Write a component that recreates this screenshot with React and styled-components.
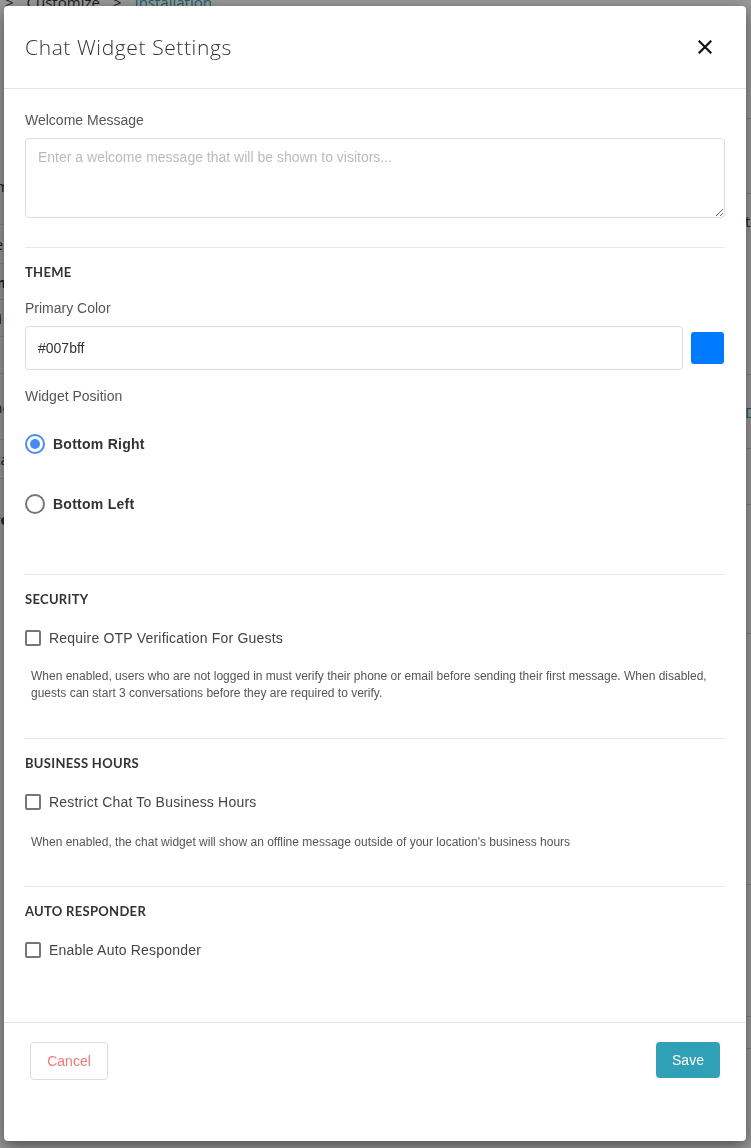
import React from 'react';
import styled, { createGlobalStyle } from 'styled-components';

const GlobalStyle = createGlobalStyle`
  html, body {
    margin: 0;
    padding: 0;
  }
  body {
    font-family: "Liberation Sans", Arial, sans-serif;
    background: #fff;
    overflow: hidden;
  }
  * {
    box-sizing: border-box;
  }
`;

// Page behind the modal, only a few pixels show at the edges
const Page = styled.div`
  position: relative;
  width: 751px;
  height: 1148px;
  overflow: hidden;
`;

const Breadcrumb = styled.div`
  display: flex;
  gap: 13px;
  margin-top: -8px;
  padding-left: 5px;
  font-family: "Open Sans", sans-serif;
  font-size: 15px;
  line-height: 20px;
`;

const Crumb = styled.span`
  color: ${props => (props.$active ? '#2a9fb5' : '#333')};
`;

const BackGrid = styled.div`
  display: flex;
`;

const BackColumn = styled.div`
  width: ${props => props.$width}px;
  padding-top: ${props => props.$top}px;
  flex-shrink: 0;
`;

const BackRow = styled.div`
  height: ${props => props.$h}px;
  border-bottom: ${props => (props.$line ? '1px solid #ddd' : 'none')};
  display: flex;
  flex-direction: column;
  justify-content: ${props => (props.$top ? 'flex-start' : 'center')};
  padding-top: ${props => (props.$top ? '10px' : '0')};
  margin-left: ${props => props.$shift || 0}px;
  font-family: "Open Sans", sans-serif;
  font-size: 15px;
  line-height: 34px;
  font-weight: ${props => (props.$bold ? 700 : 400)};
  color: ${props => props.$color || '#333'};
`;

const Overlay = styled.div`
  position: fixed;
  inset: 0;
  display: flex;
  padding: 6px 5px 7px 4px;
  background: rgba(0, 0, 0, 0.4);
`;

const Modal = styled.div`
  flex: 1;
  display: flex;
  flex-direction: column;
  background: #fff;
  border-radius: 4px;
  box-shadow: 0 5px 15px rgba(0, 0, 0, 0.5);
  overflow: hidden;
`;

const Header = styled.div`
  height: 83px;
  flex-shrink: 0;
  display: flex;
  align-items: center;
  justify-content: space-between;
  padding: 0 34px 0 21px;
  border-bottom: 1px solid #e5e5e5;
`;

const Title = styled.h4`
  margin: 0;
  font-family: "Open Sans", sans-serif;
  font-weight: 300;
  font-size: 21px;
  letter-spacing: 0.6px;
  color: #333;
`;

const CloseButton = styled.button`
  display: flex;
  padding: 0;
  border: none;
  background: none;
  cursor: pointer;
`;

const Body = styled.div`
  flex: 1;
  padding: 21px 21px 0;
`;

const FieldLabel = styled.div`
  margin-top: ${props => props.$gap || 0}px;
  font-size: 14px;
  line-height: 20px;
  color: #555;
`;

const TextArea = styled.textarea`
  display: block;
  width: 100%;
  height: 80px;
  margin-top: 8px;
  padding: 8px 12px;
  border: 1px solid #ddd;
  border-radius: 4px;
  font-family: "Liberation Sans", Arial, sans-serif;
  font-size: 14px;
  line-height: 20px;
  color: #333;
  resize: vertical;

  &::placeholder {
    color: #bbb;
  }
`;

const Section = styled.section`
  margin-top: ${props => props.$top || 0}px;
  padding: 14px 0 ${props => props.$bottom || 0}px;
  border-top: 1px solid #e8e8e8;
`;

const Heading = styled.h5`
  margin: 0;
  font-family: Lato, "Open Sans", sans-serif;
  font-weight: 700;
  font-size: 13px;
  line-height: 20px;
  letter-spacing: 0.3px;
  color: #333;
  text-transform: uppercase;
`;

const ColorRow = styled.div`
  display: flex;
  align-items: center;
  gap: 8px;
  margin-top: 8px;
`;

const TextInput = styled.input`
  flex: 1;
  height: 44px;
  padding: 0 12px;
  border: 1px solid #ddd;
  border-radius: 4px;
  font-family: "Liberation Sans", Arial, sans-serif;
  font-size: 14px;
  color: #333;
`;

const Swatch = styled.div`
  width: 33px;
  height: 32px;
  margin-right: 1px;
  border-radius: 3px;
  background: ${props => props.$color};
`;

const RadioGroup = styled.div`
  margin-top: 8px;
`;

const RadioRow = styled.label`
  display: flex;
  align-items: center;
  gap: 8px;
  height: 60px;
  cursor: pointer;
`;

const RadioMark = styled.span`
  position: relative;
  width: 20px;
  height: 20px;
  border-radius: 50%;
  border: 2px solid ${props => (props.$checked ? '#4a8af4' : '#767676')};

  &::after {
    content: '';
    display: ${props => (props.$checked ? 'block' : 'none')};
    position: absolute;
    top: 3px;
    left: 3px;
    width: 10px;
    height: 10px;
    border-radius: 50%;
    background: #4a8af4;
  }
`;

const RadioText = styled.span`
  font-size: 14px;
  font-weight: 700;
  letter-spacing: 0.25px;
  color: #333;
`;

const CheckRow = styled.label`
  display: flex;
  align-items: center;
  gap: 8px;
  height: 20px;
  margin-top: 19px;
  cursor: pointer;
`;

const CheckMark = styled.span`
  width: 16px;
  height: 16px;
  border: 2px solid #767676;
  border-radius: 2px;
`;

const CheckText = styled.span`
  font-size: 14px;
  letter-spacing: 0.2px;
  color: #444;
`;

const HelpText = styled.p`
  margin: ${props => props.$gap}px 0 0;
  padding-left: 6px;
  font-size: 12px;
  line-height: 17px;
  color: #555;
`;

const Footer = styled.div`
  height: 119px;
  flex-shrink: 0;
  display: flex;
  align-items: flex-start;
  justify-content: space-between;
  padding: 19px 26px 0;
  border-top: 1px solid #e5e5e5;
`;

const CancelButton = styled.button`
  width: 78px;
  height: 38px;
  border: 1px solid #ddd;
  border-radius: 4px;
  background: #fff;
  font-family: "Liberation Sans", Arial, sans-serif;
  font-size: 14px;
  color: #f07878;
`;

const SaveButton = styled.button`
  width: 64px;
  height: 36px;
  border: none;
  border-radius: 4px;
  background: #30a0b6;
  font-family: "Liberation Sans", Arial, sans-serif;
  font-size: 14px;
  color: #fff;
`;

const leftRows = [
  { h: 78, text: 'Name', line: true },
  { h: 39, text: 'Intent', line: true },
  { h: 36, text: 'Domain', bold: true, line: true },
  { h: 37, text: 'Emi', line: true },
  { h: 37, text: 'Etc', line: true },
  { h: 66, text: 'Tone', line: true },
  { h: 39, text: 'Data', line: true },
  { h: 80, text: 'Tarea', bold: true },
  { h: 40, text: 'Set', color: '#2a9fb5' },
];

const rightRows = [
  { h: 67, line: true },
  { h: 75, line: true },
  { h: 181, text: 'tion', top: true, line: true },
  { h: 74, text: 'Default', color: '#2a9fb5', line: true },
  { h: 56, line: true },
  { h: 129, line: true },
  { h: 251, line: true },
  { h: 132, line: true },
  { h: 32, line: true },
];

const Background = () => (
  <Page>
    <Breadcrumb>
      <Crumb>&gt;</Crumb>
      <Crumb>Customize</Crumb>
      <Crumb>&gt;</Crumb>
      <Crumb $active>Installation</Crumb>
    </Breadcrumb>
    <BackGrid>
      <BackColumn $width={745} $top={135}>
        {leftRows.map((r, i) => (
          <BackRow key={i} $h={r.h} $line={r.line} $bold={r.bold} $color={r.color} $shift={-24}>
            {r.text}
          </BackRow>
        ))}
      </BackColumn>
      <BackColumn $width={300} $top={40}>
        {rightRows.map((r, i) => (
          <BackRow key={i} $h={r.h} $line={r.line} $color={r.color} $top={r.top}>
            {r.text}
          </BackRow>
        ))}
      </BackColumn>
    </BackGrid>
  </Page>
);

const CloseIcon = () => (
  <svg width="14" height="14" viewBox="0 0 14 14">
    <path d="M1.5 1.5 L12.5 12.5 M12.5 1.5 L1.5 12.5" stroke="#111" strokeWidth="2.2" strokeLinecap="square" />
  </svg>
);

const App = () => {
  return (
    <>
      <GlobalStyle />
      <Background />
      <Overlay>
        <Modal>
          <Header>
            <Title>Chat Widget Settings</Title>
            <CloseButton aria-label="Close">
              <CloseIcon />
            </CloseButton>
          </Header>
          <Body>
            <FieldLabel>Welcome Message</FieldLabel>
            <TextArea placeholder="Enter a welcome message that will be shown to visitors..." />

            <Section $top={29} $bottom={40}>
              <Heading>Theme</Heading>
              <FieldLabel $gap={16}>Primary Color</FieldLabel>
              <ColorRow>
                <TextInput defaultValue="#007bff" />
                <Swatch $color="#007bff" />
              </ColorRow>
              <FieldLabel $gap={16}>Widget Position</FieldLabel>
              <RadioGroup>
                <RadioRow>
                  <RadioMark $checked />
                  <RadioText>Bottom Right</RadioText>
                </RadioRow>
                <RadioRow>
                  <RadioMark />
                  <RadioText>Bottom Left</RadioText>
                </RadioRow>
              </RadioGroup>
            </Section>

            <Section $bottom={36}>
              <Heading>Security</Heading>
              <CheckRow>
                <CheckMark />
                <CheckText>Require OTP Verification For Guests</CheckText>
              </CheckRow>
              <HelpText $gap={20}>
                When enabled, users who are not logged in must verify their phone or email before sending their first message. When disabled, guests can start 3 conversations before they are required to verify.
              </HelpText>
            </Section>

            <Section $bottom={35}>
              <Heading>Business Hours</Heading>
              <CheckRow>
                <CheckMark />
                <CheckText>Restrict Chat To Business Hours</CheckText>
              </CheckRow>
              <HelpText $gap={22}>
                When enabled, the chat widget will show an offline message outside of your location's business hours
              </HelpText>
            </Section>

            <Section>
              <Heading>Auto Responder</Heading>
              <CheckRow>
                <CheckMark />
                <CheckText>Enable Auto Responder</CheckText>
              </CheckRow>
            </Section>
          </Body>
          <Footer>
            <CancelButton>Cancel</CancelButton>
            <SaveButton>Save</SaveButton>
          </Footer>
        </Modal>
      </Overlay>
    </>
  );
};

export default App;
